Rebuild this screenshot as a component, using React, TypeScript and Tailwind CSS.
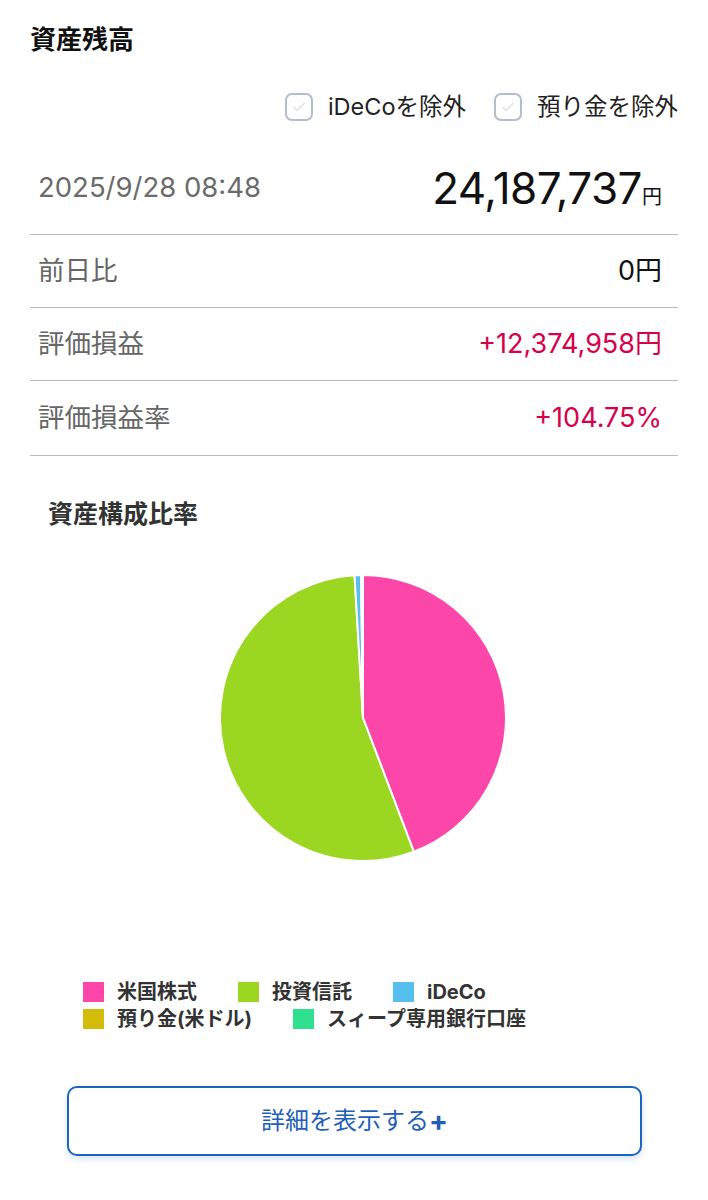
import React from "react";

const FONT = { fontFamily: 'Inter, "Noto Sans CJK JP", sans-serif' };

const slices = [
  { name: "米国株式", color: "#fc46aa", from: 0, to: 159.2 },
  { name: "投資信託", color: "#9bd620", from: 159.2, to: 356.6 },
  { name: "iDeCo", color: "#56bfef", from: 356.6, to: 359.2 },
  { name: "預り金(米ドル)", color: "#d4bd0a", from: 359.2, to: 359.6 },
  { name: "スイープ専用銀行口座", color: "#2fe08f", from: 359.6, to: 360 },
];

const legend = [
  { label: "米国株式", color: "#fc46aa" },
  { label: "投資信託", color: "#9bd620" },
  { label: "iDeCo", color: "#56bfef" },
  { label: "預り金(米ドル)", color: "#d4bd0a" },
  { label: "スィープ専用銀行口座", color: "#2fe08f" },
];

function arc(cx: number, cy: number, r: number, a0: number, a1: number) {
  const p = (a: number) => {
    const rad = ((a - 90) * Math.PI) / 180;
    return [cx + r * Math.cos(rad), cy + r * Math.sin(rad)];
  };
  const [x0, y0] = p(a0);
  const [x1, y1] = p(a1);
  const large = a1 - a0 > 180 ? 1 : 0;
  return `M${cx},${cy} L${x0},${y0} A${r},${r} 0 ${large} 1 ${x1},${y1} Z`;
}

function Pie() {
  return (
    <svg width="290" height="290" viewBox="0 0 290 290">
      {slices.map((s) => (
        <path
          key={s.name}
          d={arc(145, 145, 143, s.from, s.to)}
          fill={s.color}
          stroke="#ffffff"
          strokeWidth="2"
          strokeLinejoin="round"
        />
      ))}
    </svg>
  );
}

function Check({ label }: { label: string }) {
  return (
    <label className="flex items-center gap-[15px]">
      <span className="w-[28px] h-[28px] rounded-[7px] border-2 border-[#b3bdcc] bg-white flex items-center justify-center">
        <svg width="16" height="16" viewBox="0 0 16 16" fill="none">
          <path d="M3 8.5l3 3 7-7" stroke="#dae2ed" strokeWidth="1.5" strokeLinecap="round" strokeLinejoin="round" />
        </svg>
      </span>
      <span className="text-[23.5px] text-[#222]">{label}</span>
    </label>
  );
}

function Row({ label, value, red, h }: { label: string; value: string; red?: boolean; h: string }) {
  return (
    <div className={`flex items-center justify-between pl-[8px] pr-[16px] border-b-[1.5px] border-[#b5bdc9] ${h}`}>
      <span className="text-[26.5px] text-[#666]">{label}</span>
      <span className={`text-[27px] ${red ? "text-[#d6004b]" : "text-[#111]"}`}>{value}</span>
    </div>
  );
}

export default function App() {
  return (
    <div className="w-[708px] h-[1200px] bg-white px-[30px] pt-[21px]" style={FONT}>
      <h1 className="text-[26px] font-bold text-[#111] leading-[38px]">資産残高</h1>

      <div className="flex justify-end gap-[28px] mt-[32px] h-[32px] items-center">
        <Check label="iDeCoを除外" />
        <Check label="預り金を除外" />
      </div>

      {/* total balance */}
      <div className="flex items-center justify-between pl-[8px] pr-[16px] h-[97px] mt-[15px] pt-[3px] border-b-[1.5px] border-[#b5bdc9]">
        <span className="text-[27.5px] text-[#6b6b6b]">2025/9/28 08:48</span>
        <span className="flex items-baseline text-[#111]">
          <span className="text-[44px] tracking-[-0.5px]">24,187,737</span>
          <span className="text-[20px]">円</span>
        </span>
      </div>

      <Row label="前日比" value="0円" h="h-[73px]" />
      <Row label="評価損益" value="+12,374,958円" red h="h-[73px]" />
      <Row label="評価損益率" value="+104.75%" red h="h-[75px]" />

      <h2 className="text-[25px] font-bold text-[#333] pl-[18px] mt-[41px] leading-[34px]">資産構成比率</h2>

      <div className="flex justify-center pl-[18px] mt-[42px]">
        <Pie />
      </div>

      <div className="flex flex-wrap pl-[53px] pr-[100px] mt-[118px] gap-y-[5px]">
        {legend.map((l) => (
          <div key={l.label} className="flex items-center h-[22px] mr-[41px]">
            <span className="w-[21px] h-[20px] mr-[13px]" style={{ backgroundColor: l.color }} />
            <span className="text-[20px] font-bold text-[#333] leading-[22px]">{l.label}</span>
          </div>
        ))}
      </div>

      <button className="mt-[56px] ml-[37px] w-[575px] h-[70px] rounded-[10px] border-2 border-[#1b64bf] bg-white shadow-[0_3px_6px_rgba(27,100,191,0.18)] text-[24px] text-[#1f5fb8] flex items-center justify-center">
        詳細を表示する<span className="font-bold text-[28px] leading-none">+</span>
      </button>
    </div>
  );
}
